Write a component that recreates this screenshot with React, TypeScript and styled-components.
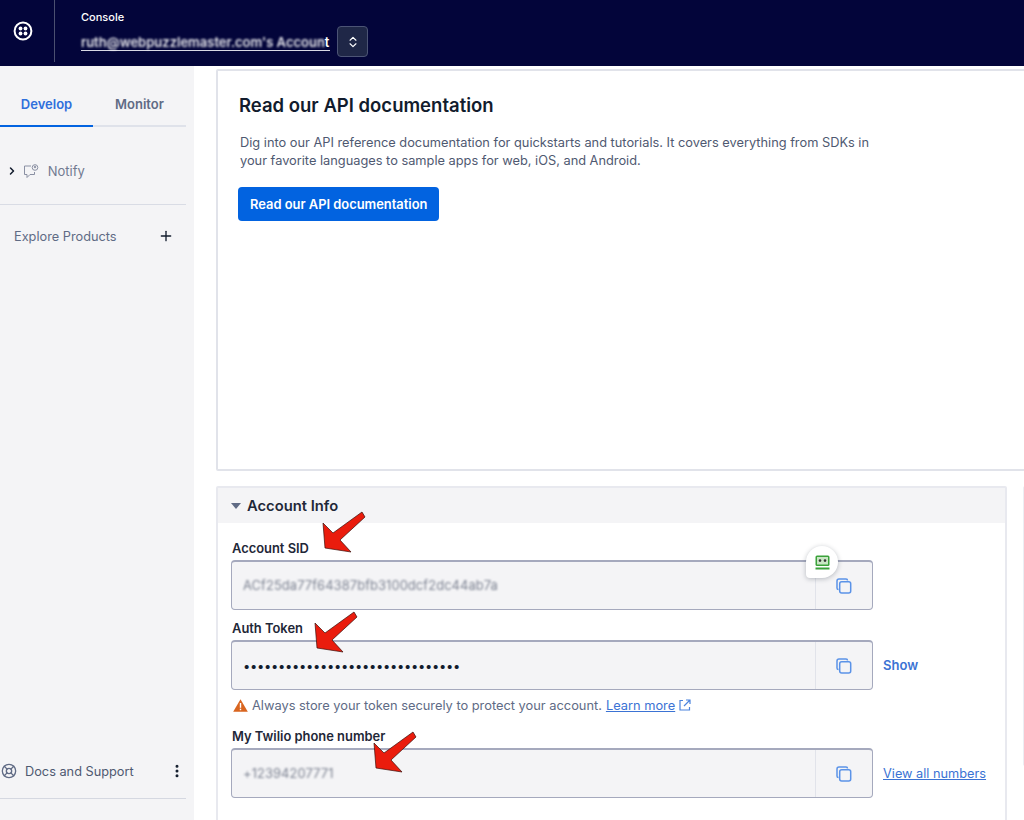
import styled, { createGlobalStyle } from "styled-components";
import { ChevronsUpDown, ChevronRight, EllipsisVertical, LifeBuoy, Plus } from "lucide-react";

const GlobalStyle = createGlobalStyle`
  html, body {
    margin: 0;
    height: 820px;
    overflow: hidden;
    background: #fff;
    font-family: Inter, "Liberation Sans", sans-serif;
  }
  * { box-sizing: border-box; }
`;

// Start header
const Header = styled.header`
  height: 66px;
  background: #03053a;
  display: flex;
  color: #fff;
`;

const LogoCell = styled.div`
  width: 55px;
  height: 62px;
  border-right: 1px solid #4b5070;
  display: flex;
  align-items: center;
  justify-content: center;
  padding-right: 8px;
`;

const AccountCell = styled.div`
  padding: 11px 0 0 26px;
`;

const ConsoleLabel = styled.div`
  font-size: 11px;
  line-height: 13px;
  font-weight: 500;
`;

const AccountRow = styled.div`
  display: flex;
  align-items: center;
  gap: 7px;
  margin-top: 2px;
`;

const AccountName = styled.div`
  font-size: 13px;
  font-weight: 600;
  width: 249px;
  white-space: nowrap;
  border-bottom: 1px solid #d8d9e4;
  line-height: 15px;
  margin-top: 3px;
`;

const Blurred = styled.span`
  filter: blur(1px);
  opacity: 0.9;
`;

const SwitchButton = styled.div`
  width: 31px;
  height: 31px;
  border-radius: 4px;
  background: #1f2747;
  border: 1px solid #4c5475;
  display: flex;
  align-items: center;
  justify-content: center;
`;
// End header

const Body = styled.div`
  display: flex;
  height: 754px;
`;

// Start sidebar
const Sidebar = styled.aside`
  width: 194px;
  flex-shrink: 0;
  background: #f4f4f6;
  display: flex;
  flex-direction: column;
  padding-right: 8px;
  padding-bottom: 21px;
`;

const Tabs = styled.div`
  display: flex;
  height: 61px;
  border-bottom: 2px solid #dfe2ea;
`;

const Tab = styled.div<{ $active?: boolean }>`
  width: 93px;
  height: 61px;
  display: flex;
  align-items: center;
  justify-content: center;
  padding-top: 16px;
  font-size: 13px;
  font-weight: 600;
  color: ${(p) => (p.$active ? "#2f6fdc" : "#606b85")};
  border-bottom: 2px solid ${(p) => (p.$active ? "#0263e0" : "transparent")};
`;

const NotifyRow = styled.div`
  height: 78px;
  border-bottom: 1px solid #d9dce5;
  display: flex;
  align-items: center;
  padding: 11px 0 0 6px;
  font-size: 13px;
  color: #717a91;
  gap: 5px;
`;

const ExploreRow = styled.div`
  height: 62px;
  display: flex;
  align-items: center;
  justify-content: space-between;
  padding: 0 12px 0 14px;
  font-size: 12.75px;
  color: #606b85;
`;

const SupportRow = styled.div`
  margin-top: auto;
  height: 56px;
  border-bottom: 1px solid #d5d8e1;
  display: flex;
  align-items: center;
  padding: 1px 1px 0 1px;
  font-size: 12.75px;
  color: #4f5971;
  gap: 8px;
`;

const SupportLabel = styled.span`
  flex: 1;
`;
// End sidebar

// Start main
const Main = styled.main`
  flex: 1;
  min-width: 0;
  padding: 3px 0 0 22px;
  display: flex;
  flex-direction: column;
  gap: 15px;
`;

const DocCard = styled.section`
  width: 830px;
  height: 402px;
  flex-shrink: 0;
  border: 2px solid #e1e3ea;
  border-radius: 2px;
  padding: 22px 21px;
`;

const DocTitle = styled.h2`
  margin: 0 0 17px;
  font-size: 18.5px;
  line-height: 24px;
  font-weight: 600;
  color: #121c2d;
`;

const DocText = styled.p`
  margin: 0 0 17px 1px;
  width: 650px;
  font-size: 12.8px;
  line-height: 18px;
  color: #4f5971;
`;

const PrimaryButton = styled.div`
  display: inline-flex;
  align-items: center;
  height: 34px;
  margin-left: -1px;
  padding: 0 12px;
  background: #0263e0;
  border-radius: 4px;
  color: #fff;
  font-size: 12.9px;
  font-weight: 600;
`;

const LowerRow = styled.div`
  display: flex;
  gap: 16px;
  flex-shrink: 0;
`;

const InfoCard = styled.section`
  width: 791px;
  flex-shrink: 0;
  height: 345px;
  border: 2px solid #e8e9ef;
  border-radius: 2px;
  position: relative;
`;

const SideCard = styled.div`
  width: 40px;
  height: 280px;
  border: 2px solid #eceef3;
  border-radius: 2px;
`;

const InfoHeader = styled.div`
  height: 35px;
  background: #f4f4f6;
  display: flex;
  align-items: center;
  gap: 6px;
  padding-left: 13px;
  font-size: 14.75px;
  font-weight: 600;
  color: #1f2838;
`;

const Caret = styled.div`
  width: 0;
  height: 0;
  border-left: 5px solid transparent;
  border-right: 5px solid transparent;
  border-top: 6px solid #606b85;
`;

const InfoBody = styled.div`
  padding: 18px 0 0 13px;
`;

const Label = styled.div<{ $gap: number }>`
  font-size: 12.9px;
  line-height: 15px;
  font-weight: 600;
  color: #1f2838;
  margin-top: ${(p) => p.$gap}px;
  margin-bottom: 4px;
  padding-left: 1px;
`;

const FieldRow = styled.div`
  display: flex;
  align-items: center;
  position: relative;
`;

const FieldBox = styled.div`
  width: 642px;
  height: 50px;
  background: #f4f4f6;
  border: 1px solid #a5a9bd;
  border-top-width: 2px;
  border-radius: 4px;
  display: flex;
`;

const FieldValue = styled.div<{ $blur?: boolean; $dots?: boolean }>`
  flex: 1;
  display: flex;
  align-items: center;
  padding-left: 11px;
  font-size: ${(p) => (p.$dots ? "13px" : "12.9px")};
  color: ${(p) => (p.$dots ? "#121c2d" : "#7d8392")};
  letter-spacing: ${(p) => (p.$dots ? "-0.31px" : "0.1px")};
  filter: ${(p) => (p.$blur ? "blur(1.3px)" : "none")};
`;

const CopyCell = styled.div`
  width: 57px;
  border-left: 1px solid #e1e3ea;
  display: flex;
  align-items: center;
  justify-content: center;
`;

const SideLink = styled.div<{ $underline?: boolean }>`
  margin-left: 10px;
  font-size: ${(p) => (p.$underline ? "12.75px" : "13px")};
  font-weight: ${(p) => (p.$underline ? 400 : 600)};
  color: #3b73d4;
  text-decoration: ${(p) => (p.$underline ? "underline" : "none")};
`;

const HelpText = styled.div`
  display: flex;
  align-items: center;
  margin: 7px 0 0 2px;
  height: 16px;
  gap: 4px;
  font-size: 12.83px;
  color: #606b85;
`;

const HelpLink = styled.span`
  color: #3b73d4;
  text-decoration: underline;
`;

const Arrow = styled.svg<{ $left: number; $top: number }>`
  position: absolute;
  left: ${(p) => p.$left}px;
  top: ${(p) => p.$top}px;
  width: 46px;
  height: 42px;
`;

const RoboBadge = styled.div`
  position: absolute;
  left: 575px;
  top: -14px;
  width: 32px;
  height: 32px;
  background: #fff;
  border-radius: 50% 50% 50% 4px;
  box-shadow: 0 1px 5px rgba(18, 28, 45, 0.28);
  display: flex;
  align-items: center;
  justify-content: center;
`;
// End main

const TwilioLogo = () => (
  <svg width="20" height="20" viewBox="0 0 20 20" fill="none">
    <circle cx="10" cy="10" r="8.4" stroke="#fff" strokeWidth="2" />
    <circle cx="7.5" cy="7.5" r="1.9" fill="#fff" />
    <circle cx="12.5" cy="7.5" r="1.9" fill="#fff" />
    <circle cx="7.5" cy="12.5" r="1.9" fill="#fff" />
    <circle cx="12.5" cy="12.5" r="1.9" fill="#fff" />
  </svg>
);

const NotifyIcon = () => (
  <svg width="16" height="15" viewBox="0 0 16 15" fill="none" stroke="#8a90a3" strokeWidth="1">
    <path d="M8 2H1.5v8.5H4l0 3 3-3h4.5V8" />
    <circle cx="12" cy="3.5" r="2.8" />
    <circle cx="12" cy="3" r="0.8" fill="#8a90a3" />
  </svg>
);

const CopyIcon = () => (
  <svg width="16" height="16" viewBox="0 0 16 16" fill="none" stroke="#5b93e8" strokeWidth="1.5">
    <path d="M2.5 11.5A1.5 1.5 0 0 1 1 10V3a2 2 0 0 1 2-2h7a1.5 1.5 0 0 1 1.5 1.5" />
    <rect x="3.7" y="3.7" width="11" height="11.3" rx="2" fill="#f4f4f6" />
  </svg>
);

const WarningIcon = () => (
  <svg width="15" height="13" viewBox="0 0 15 13">
    <path d="M7.5 0.3 14.8 12.8H0.2Z" fill="#d9651f" strokeLinejoin="round" />
    <rect x="6.8" y="4" width="1.4" height="4.8" fill="#fff" />
    <rect x="6.8" y="9.7" width="1.4" height="1.5" fill="#fff" />
  </svg>
);

const ExternalIcon = () => (
  <svg width="12" height="12" viewBox="0 0 12 12" fill="none" stroke="#4c84dd" strokeWidth="1.2">
    <path d="M4 1.5H1v9.5h9.5V8" />
    <path d="M5 7 10.5 1.5M7 1h4v4" />
  </svg>
);

const RoboIcon = () => (
  <svg width="15" height="15" viewBox="0 0 15 15">
    <rect x="0.5" y="0.5" width="14" height="10.5" rx="1.5" fill="#3aa23a" />
    <rect x="2" y="2" width="11" height="7.5" fill="#c9e7c4" />
    <circle cx="5" cy="5.6" r="1.3" fill="#333" />
    <circle cx="10" cy="5.6" r="1.3" fill="#333" />
    <rect x="0.5" y="12.5" width="14" height="2" fill="#3aa23a" />
  </svg>
);

const RedArrow = ({ left, top }: { left: number; top: number }) => (
  <Arrow $left={left} $top={top} viewBox="0 0 46 42">
    <polygon
      points="40,1 43,6 18,29 29,41 3,37 1,12 11,22"
      fill="#ea1c0d"
      stroke="#3a0f0a"
      strokeWidth="0.7"
    />
  </Arrow>
);

const App = () => {
  return (
    <>
      <GlobalStyle />
      <Header>
        <LogoCell>
          <TwilioLogo />
        </LogoCell>
        <AccountCell>
          <ConsoleLabel>Console</ConsoleLabel>
          <AccountRow>
            <AccountName>
              <Blurred>ruth@webpuzzlemaster.com's Accoun</Blurred>t
            </AccountName>
            <SwitchButton>
              <ChevronsUpDown size={14} color="#fff" />
            </SwitchButton>
          </AccountRow>
        </AccountCell>
      </Header>
      <Body>
        <Sidebar>
          <Tabs>
            <Tab $active>Develop</Tab>
            <Tab>Monitor</Tab>
          </Tabs>
          <NotifyRow>
            <ChevronRight size={12} color="#121c2d" strokeWidth={3} />
            <NotifyIcon />
            <span>&nbsp;Notify</span>
          </NotifyRow>
          <ExploreRow>
            Explore Products
            <Plus size={16} color="#121c2d" strokeWidth={2} />
          </ExploreRow>
          <SupportRow>
            <LifeBuoy size={16} color="#606b85" />
            <SupportLabel>Docs and Support</SupportLabel>
            <EllipsisVertical size={16} color="#121c2d" strokeWidth={2.5} />
          </SupportRow>
        </Sidebar>
        <Main>
          <DocCard>
            <DocTitle>Read our API documentation</DocTitle>
            <DocText>
              Dig into our API reference documentation for quickstarts and tutorials. It covers
              everything from SDKs in your favorite languages to sample apps for web, iOS, and
              Android.
            </DocText>
            <PrimaryButton>Read our API documentation</PrimaryButton>
          </DocCard>
          <LowerRow>
            <InfoCard>
              <InfoHeader>
                <Caret />
                Account Info
              </InfoHeader>
              <InfoBody>
                <Label $gap={0}>Account SID</Label>
                <FieldRow>
                  <FieldBox>
                    <FieldValue $blur>ACf25da77f64387bfb3100dcf2dc44ab7a</FieldValue>
                    <CopyCell>
                      <CopyIcon />
                    </CopyCell>
                  </FieldBox>
                  <RoboBadge>
                    <RoboIcon />
                  </RoboBadge>
                  <RedArrow left={91} top={-49} />
                </FieldRow>
                <Label $gap={11}>Auth Token</Label>
                <FieldRow>
                  <FieldBox>
                    <FieldValue $dots>•••••••••••••••••••••••••••••••</FieldValue>
                    <CopyCell>
                      <CopyIcon />
                    </CopyCell>
                  </FieldBox>
                  <SideLink>Show</SideLink>
                  <RedArrow left={83} top={-29} />
                </FieldRow>
                <HelpText>
                  <WarningIcon />
                  Always store your token securely to protect your account.
                  <HelpLink>Learn more</HelpLink>
                  <ExternalIcon />
                </HelpText>
                <Label $gap={16}>My Twilio phone number</Label>
                <FieldRow>
                  <FieldBox>
                    <FieldValue $blur>+12394207771</FieldValue>
                    <CopyCell>
                      <CopyIcon />
                    </CopyCell>
                  </FieldBox>
                  <SideLink $underline>View all numbers</SideLink>
                  <RedArrow left={142} top={-17} />
                </FieldRow>
              </InfoBody>
            </InfoCard>
            <SideCard />
          </LowerRow>
        </Main>
      </Body>
    </>
  );
};

export default App;
